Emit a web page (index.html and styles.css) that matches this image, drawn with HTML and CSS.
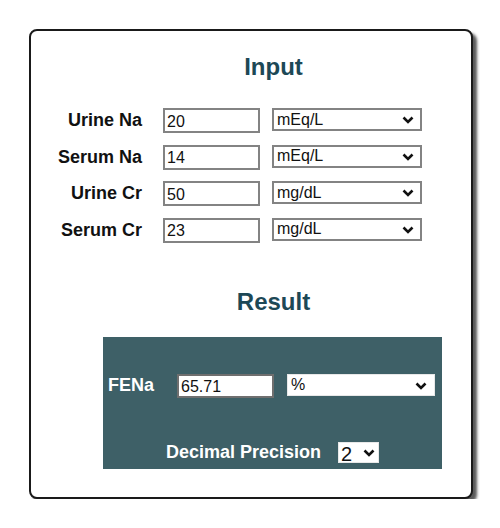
FILE: index.html
```html
<!DOCTYPE html>
<html>
<head>
<meta charset="utf-8">
<link rel="stylesheet" href="styles.css">
</head>
<body>
<div class="card">
  <h2 class="title">Input</h2>
  <div class="form">
    <label class="lbl">Urine Na</label>
    <input class="num" type="text" value="20">
    <span class="sel"><select class="unit"><option>mEq/L</option></select><svg class="chev" viewBox="0 0 12 8"><path d="M1.5 1.5 L6 6 L10.5 1.5"/></svg></span>

    <label class="lbl">Serum Na</label>
    <input class="num" type="text" value="14">
    <span class="sel"><select class="unit"><option>mEq/L</option></select><svg class="chev" viewBox="0 0 12 8"><path d="M1.5 1.5 L6 6 L10.5 1.5"/></svg></span>

    <label class="lbl">Urine Cr</label>
    <input class="num" type="text" value="50">
    <span class="sel"><select class="unit"><option>mg/dL</option></select><svg class="chev" viewBox="0 0 12 8"><path d="M1.5 1.5 L6 6 L10.5 1.5"/></svg></span>

    <label class="lbl">Serum Cr</label>
    <input class="num" type="text" value="23">
    <span class="sel"><select class="unit"><option>mg/dL</option></select><svg class="chev" viewBox="0 0 12 8"><path d="M1.5 1.5 L6 6 L10.5 1.5"/></svg></span>
  </div>

  <h2 class="title result-title">Result</h2>
  <div class="result">
    <div class="res-row">
      <label class="res-lbl">FENa</label>
      <input class="num res-num" type="text" value="65.71">
      <span class="sel sel-res"><select class="unit"><option>%</option></select><svg class="chev" viewBox="0 0 12 8"><path d="M1.5 1.5 L6 6 L10.5 1.5"/></svg></span>
    </div>
    <div class="prec-row">
      <label class="res-lbl">Decimal Precision</label>
      <span class="sel sel-prec"><select class="unit"><option>2</option></select><svg class="chev" viewBox="0 0 12 8"><path d="M1.5 1.5 L6 6 L10.5 1.5"/></svg></span>
    </div>
  </div>
</div>
</body>
</html>
```
FILE: styles.css
```css
html, body {
  margin: 0;
  padding: 0;
  background: #ffffff;
}
body {
  font-family: "Liberation Sans", Arial, sans-serif;
  color: #111;
}
.card {
  box-sizing: border-box;
  margin: 29px 0 0 29px;
  width: 444px;
  height: 470px;
  border: 2px solid #1a1a1a;
  border-radius: 8px;
  box-shadow: 4px 4px 3px #5a5a5a;
  padding-top: 22px;
  background: #fff;
}
.title {
  margin: 0;
  padding-left: 45px;
  text-align: center;
  font-size: 24px;
  line-height: 28px;
  font-weight: bold;
  color: #1d4856;
}
.form {
  margin-top: 27px;
  display: grid;
  grid-template-columns: 120px 97px 150px;
  grid-auto-rows: 25px;
  column-gap: 12px;
  row-gap: 11.67px;
  align-items: center;
}
.lbl {
  text-align: right;
  padding-right: 9px;
  font-size: 18px;
  font-weight: bold;
}
.num {
  box-sizing: border-box;
  width: 97px;
  height: 25px;
  margin: 0;
  border: 2px solid #838383;
  padding: 2px 2px 0 2px;
  font-family: "Liberation Sans", Arial, sans-serif;
  font-size: 16px;
  color: #111;
  background: #fff;
  outline: none;
}
.sel {
  position: relative;
  display: block;
  width: 150px;
  height: 23px;
  align-self: start;
}
.unit {
  -webkit-appearance: none;
  appearance: none;
  box-sizing: border-box;
  width: 100%;
  height: 100%;
  margin: 0;
  border: 2px solid #838383;
  border-radius: 0;
  padding: 0 0 1px 3px;
  font-family: "Liberation Sans", Arial, sans-serif;
  font-size: 16px;
  color: #111;
  background: #fff;
}
.chev {
  position: absolute;
  right: 8px;
  top: 8px;
  width: 12px;
  height: 8px;
  pointer-events: none;
}
.chev path {
  fill: none;
  stroke: #111;
  stroke-width: 2.6;
}
.result-title {
  margin-top: 45px;
}
.result {
  box-sizing: border-box;
  margin: 21px 0 0 72px;
  width: 339px;
  height: 132px;
  background: #3e6067;
  padding: 37px 0 0 5px;
}
.res-row {
  display: flex;
  align-items: center;
}
.res-lbl {
  font-size: 18px;
  font-weight: bold;
  color: #ffffff;
}
.res-num {
  margin-left: 23px;
  height: 24px;
  border-color: #6f6f6f;
}
.sel-res {
  margin-left: 13px;
  width: 148px;
  height: 22px;
  align-self: flex-start;
}
.sel-res .unit {
  border-color: #e8e8e8;
  border-width: 1px;
}
.prec-row {
  margin-top: 44px;
  margin-left: -5px;
  display: flex;
  justify-content: center;
  align-items: center;
}
.sel-prec {
  margin-left: 17px;
  width: 41px;
  height: 21px;
}
.sel-prec .unit {
  border-width: 1px;
  border-color: #e8e8e8;
  padding: 0 0 0 2px;
  font-size: 20px;
}
.sel-prec .chev {
  right: 4px;
  top: 7px;
}
```
